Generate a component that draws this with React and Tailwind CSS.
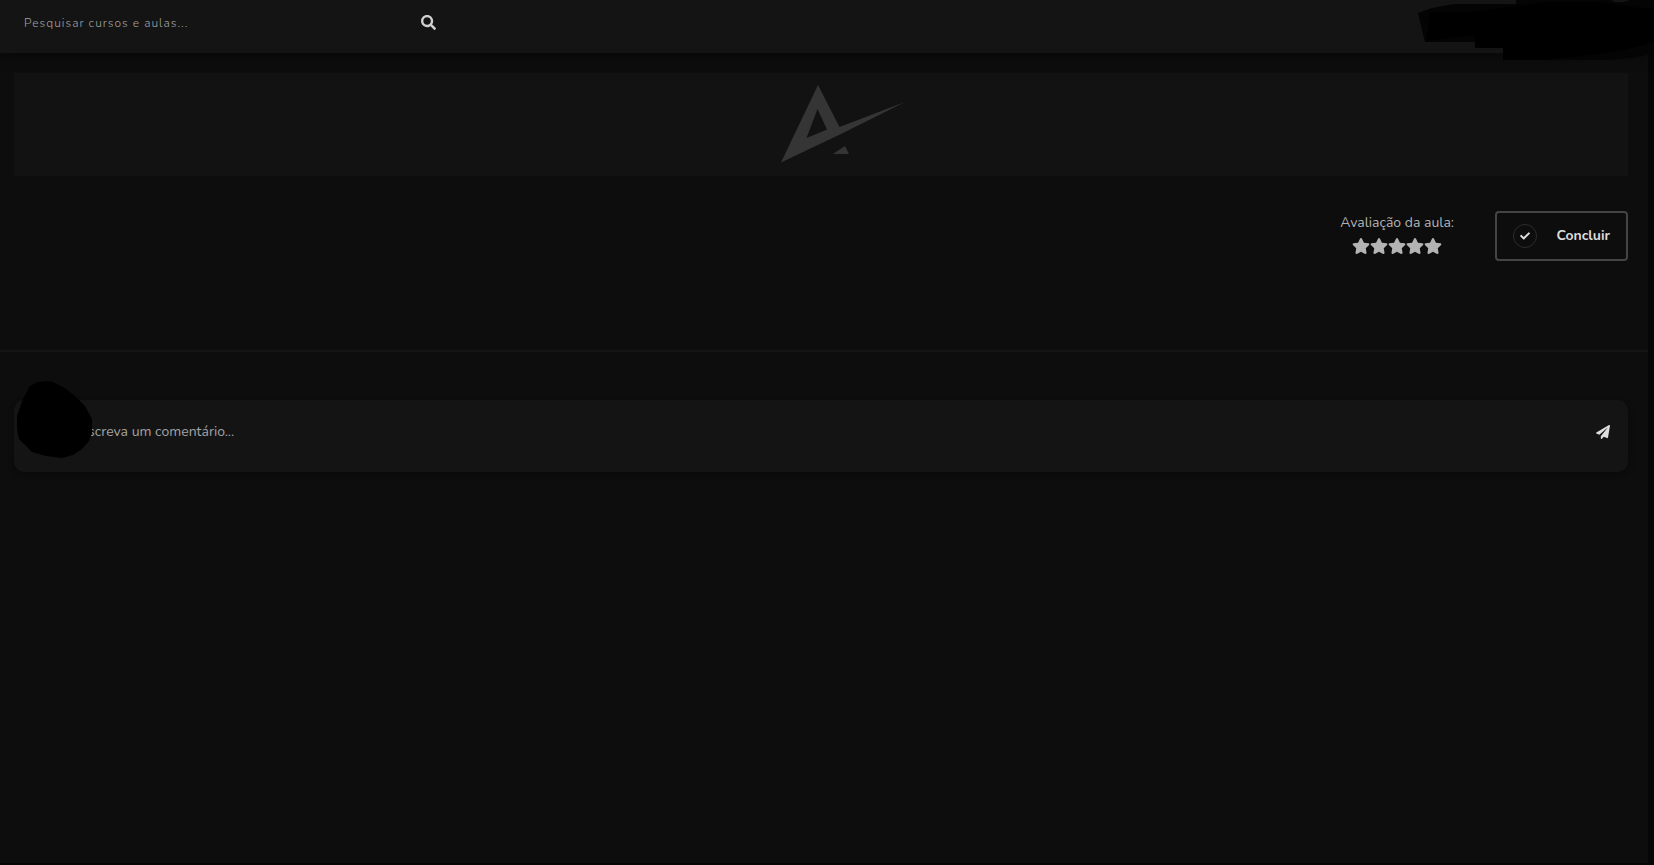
import { useState } from "react";
import { FaCheck, FaPaperPlane, FaSearch, FaStar } from "react-icons/fa";

const STARS = [1, 2, 3, 4, 5];

function Logo() {
  return (
    <svg
      className="w-[124px] h-[78px] fill-[#353535]"
      viewBox="0 0 124 78"
      role="img"
      aria-label="Logo"
    >
      <path
        fillRule="evenodd"
        d="M37 0L58.5 42L124 17L60 49L0 77.5ZM36.5 24L25.5 53L46 44.5Z"
      />
      <path d="M52 69L64 61L68 69Z" />
    </svg>
  );
}

function Header() {
  const [search, setSearch] = useState("");

  return (
    <header className="relative flex h-[53px] items-center bg-[#141414] pb-2 pl-6 shadow-[0_4px_12px_rgba(0,0,0,0.4)]">
      <form
        onSubmit={(e) => e.preventDefault()}
        className="flex w-[412px] items-center justify-between"
      >
        <input
          type="text"
          aria-label="Pesquisar cursos e aulas"
          placeholder="Pesquisar cursos e aulas..."
          value={search}
          onChange={(e) => setSearch(e.target.value)}
          className="flex-1 bg-transparent text-xs font-light tracking-[1px] text-gray-200 outline-none placeholder:text-[#a3a3a3]"
        />
        <button
          type="submit"
          aria-label="Pesquisar"
          className="cursor-pointer text-[#d0d0d0]"
        >
          <FaSearch size={15} />
        </button>
      </form>

      {/* Hidden user area */}
      <svg
        className="absolute -right-[6px] top-0 h-[60px] w-[236px]"
        viewBox="0 0 236 60"
        aria-hidden="true"
      >
        <path
          d="M0 13L14 8L36 4H98V0H236V54L212 58L190 60H85V48H57V42H7Z"
          fill="#040404"
        />
        <path
          d="M12 12H54L98 6L130 2H180L204 5L220 8H236V42L205 50L165 56L120 60H85V48H57V35L30 38L8 41Z"
          fill="#000"
        />
        <path d="M193 0H212L205 2H197Z" fill="#141414" />
      </svg>
    </header>
  );
}

function Rating() {
  const [rating, setRating] = useState(0);

  return (
    <div className="flex flex-col items-center pt-0.5">
      <p className="text-sm leading-5 text-[#b3b3b3]">Avaliação da aula:</p>
      <div className="mt-1 flex">
        {STARS.map((star) => (
          <button
            key={star}
            type="button"
            aria-label={`${star} estrelas`}
            onClick={() => setRating(star)}
            className={`cursor-pointer ${
              star <= rating ? "text-yellow-400" : "text-[#b3b3b3]"
            }`}
          >
            <FaStar size={18} />
          </button>
        ))}
      </div>
    </div>
  );
}

function CommentBox() {
  const [comment, setComment] = useState("");

  return (
    <form
      onSubmit={(e) => e.preventDefault()}
      className="relative ml-[14px] mr-5 mt-12 flex h-[72px] items-center rounded-[10px] bg-[#141414] pb-2 pl-[66px] pr-[18px] shadow-[0_2px_6px_rgba(0,0,0,0.3)]"
    >
      <input
        type="text"
        aria-label="Escreva um comentário"
        placeholder="Escreva um comentário..."
        value={comment}
        onChange={(e) => setComment(e.target.value)}
        className="flex-1 bg-transparent text-sm text-gray-200 outline-none placeholder:text-[#a3a3a3]"
      />
      <button
        type="submit"
        aria-label="Enviar"
        className="cursor-pointer text-[#dedede]"
      >
        <FaPaperPlane size={14} />
      </button>

      {/* Hidden avatar */}
      <svg
        className="absolute -top-[19px] left-[2px] h-[77px] w-[76px]"
        viewBox="0 0 76 77"
        aria-hidden="true"
      >
        <path
          d="M22 1L30 0L37 1L47 6L58 14L69 25L76 38V52L73 60L66 68L57 74L46 77L30 75L16 71L3 58L1 48V35L7 18L14 5Z"
          fill="#000"
        />
      </svg>
    </form>
  );
}

export default function App() {
  const [done, setDone] = useState(false);

  return (
    <div className="min-h-screen border-r-[6px] border-b-2 border-[#060606] bg-[#0d0d0d] font-['Nunito','Lato',sans-serif]">
      <Header />

      <main>
        <section className="ml-[14px] mr-5 mt-5 flex h-[103px] items-center justify-center bg-[#121212] pb-0.5 pl-11">
          <Logo />
        </section>

        <section className="ml-[14px] mr-5 mt-[35px] flex items-start justify-end gap-[41px]">
          <Rating />
          <button
            type="button"
            aria-pressed={done}
            onClick={() => setDone(!done)}
            className="flex h-[50px] w-[133px] cursor-pointer items-center justify-between rounded border-2 border-[#444] px-4 text-sm font-bold text-[#dcdcdc]"
          >
            <span className="flex size-6 items-center justify-center rounded-full border border-[#2c2c2c]">
              <FaCheck size={10} />
            </span>
            Concluir
          </button>
        </section>

        <hr className="mt-[89px] border-t-2 border-[#141414]" />

        <CommentBox />
      </main>
    </div>
  );
}
